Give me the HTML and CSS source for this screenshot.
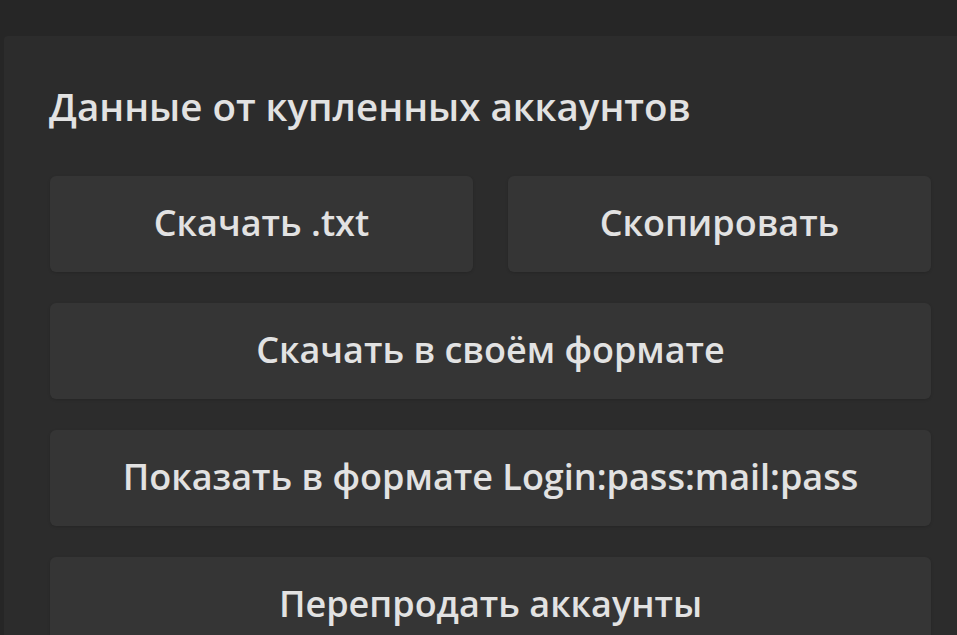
FILE: index.html
```html
<!DOCTYPE html>
<html lang="ru">
<head>
<meta charset="utf-8">
<link rel="stylesheet" href="styles.css">
</head>
<body>
<div class="page">
  <section class="card">
    <h2 class="title">Данные от купленных аккаунтов</h2>
    <div class="actions">
      <div class="row split">
        <button class="btn">Скачать .txt</button>
        <button class="btn">Скопировать</button>
      </div>
      <button class="btn">Скачать в своём формате</button>
      <button class="btn">Показать в формате Login:pass:mail:pass</button>
      <button class="btn">Перепродать аккаунты</button>
    </div>
  </section>
</div>
</body>
</html>
```
FILE: styles.css
```css
* { box-sizing: border-box; }
html, body {
  margin: 0;
  padding: 0;
  height: 100%;
  overflow: hidden;
  background: #262626;
  font-family: "Open Sans", "Noto Sans", sans-serif;
}
.page {
  padding: 36px 0 0 4px;
}
.card {
  background: #2c2c2c;
  padding: 46px 26px 40px 46px;
  border-top-left-radius: 4px;
}
.title {
  margin: 0 0 0 -1px;
  font-size: 38.5px;
  line-height: 48px;
  font-weight: 600;
  color: #e2e2e2;
  letter-spacing: 0;
}
.actions {
  margin-top: 46px;
  display: flex;
  flex-direction: column;
  gap: 31px;
}
.row.split {
  display: grid;
  grid-template-columns: 1fr 1fr;
  gap: 35px;
}
.btn {
  height: 96px;
  border: none;
  border-radius: 6px;
  background: #353535;
  color: #e2e2e2;
  font-family: "Open Sans", "Noto Sans", sans-serif;
  font-size: 36px;
  font-weight: 600;
  padding: 0 0 4px;
  box-shadow: 0 1px 3px rgba(0,0,0,0.15);
}
```
